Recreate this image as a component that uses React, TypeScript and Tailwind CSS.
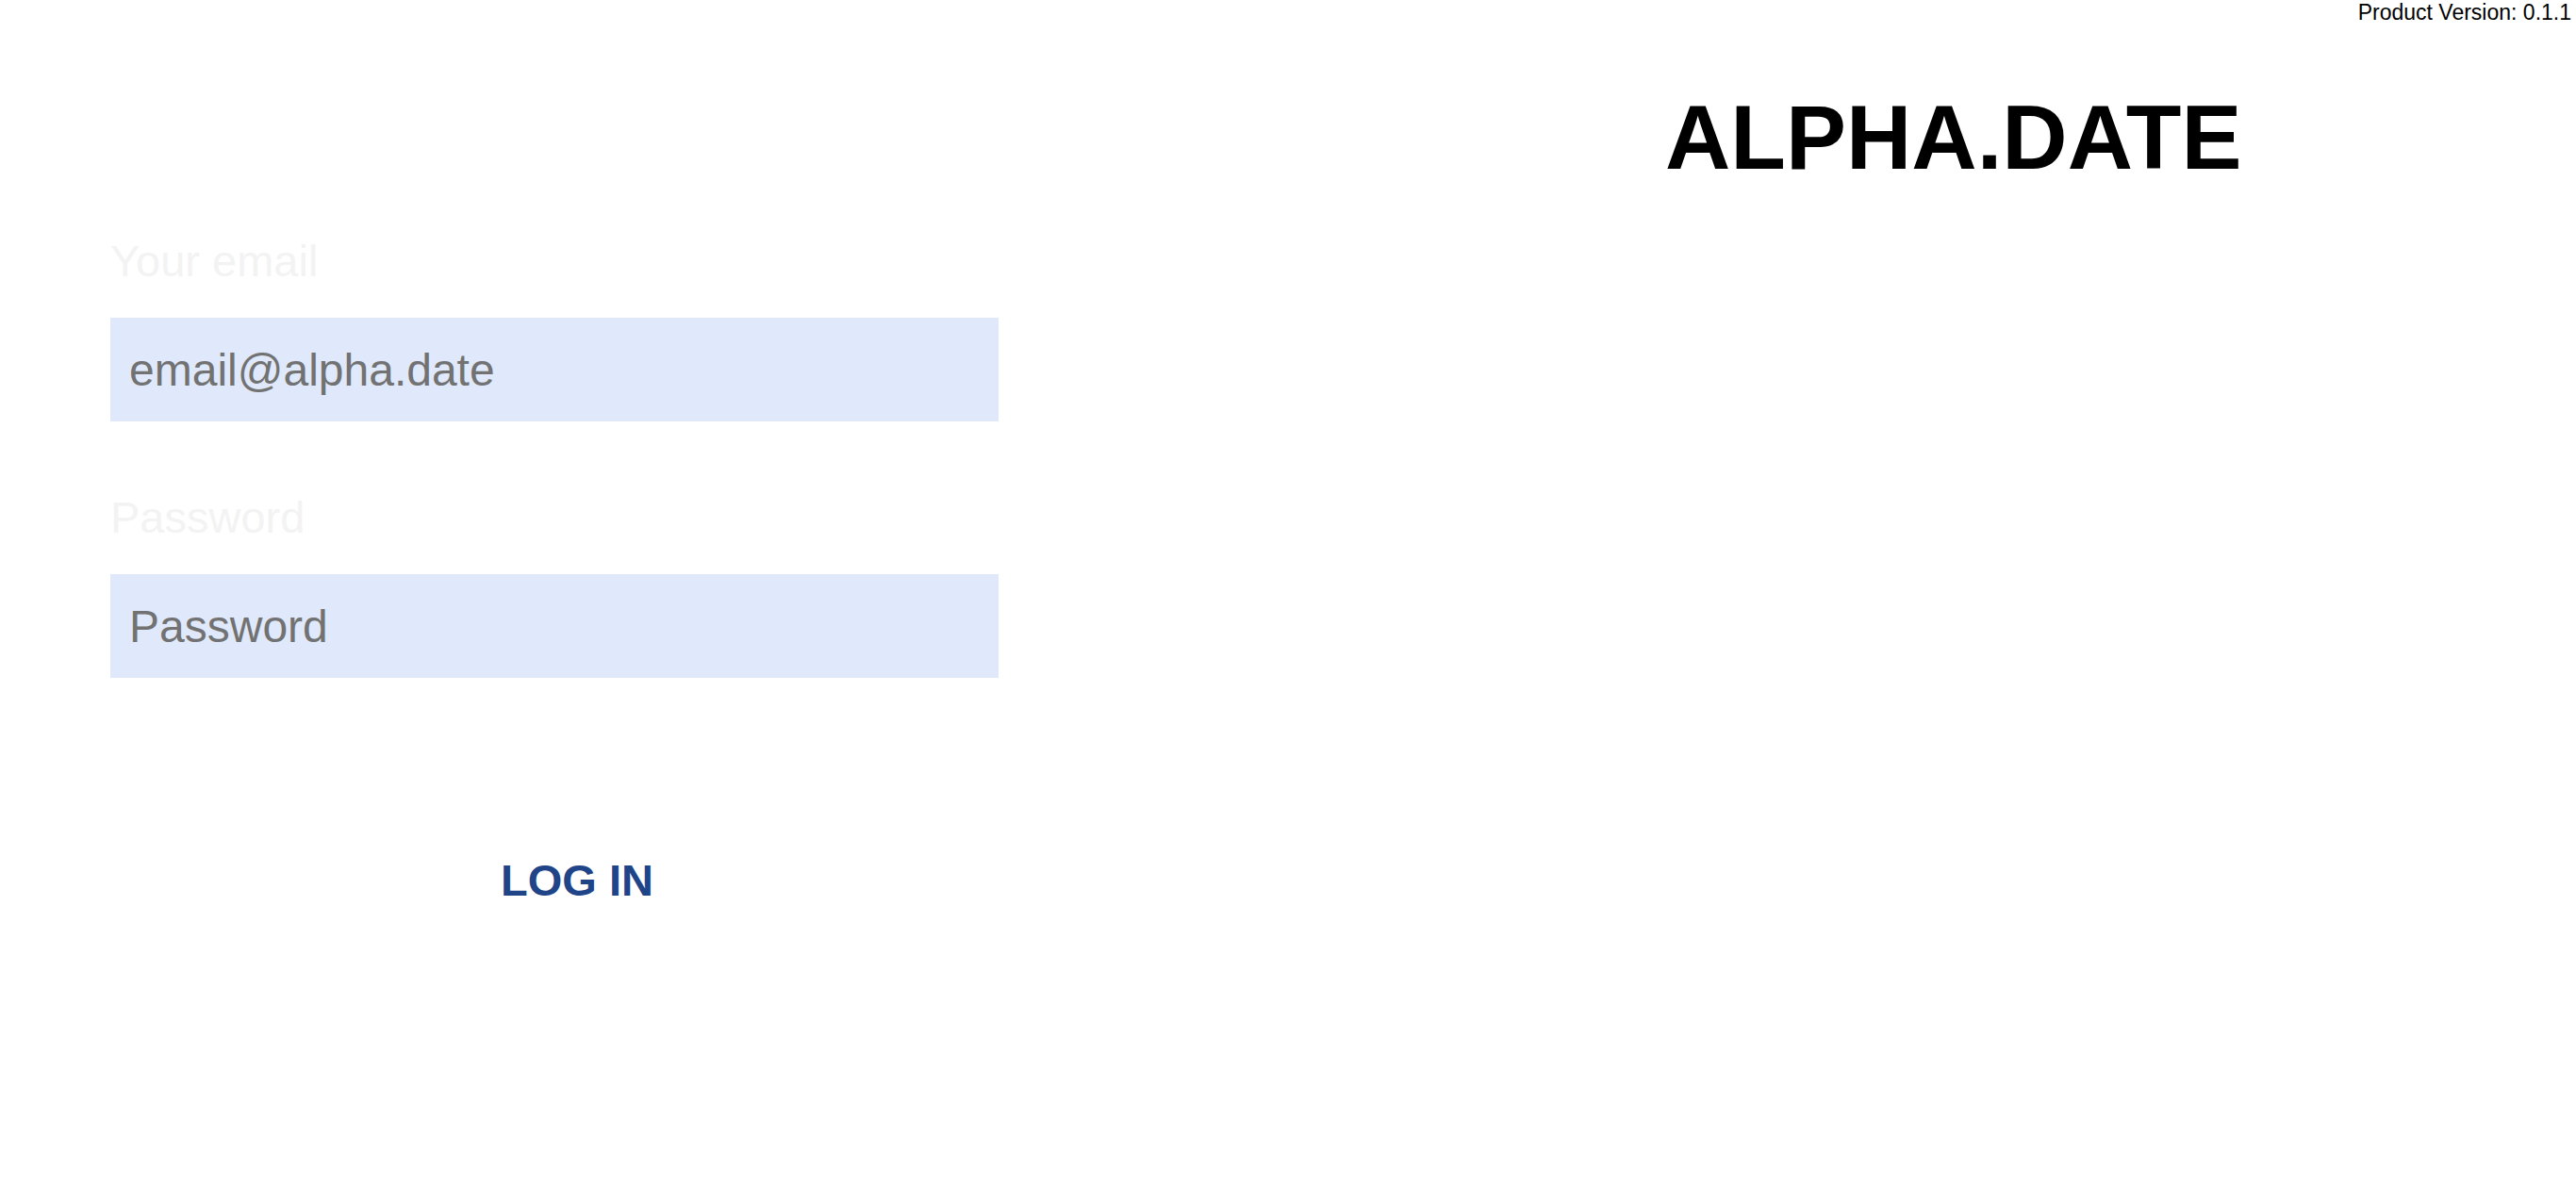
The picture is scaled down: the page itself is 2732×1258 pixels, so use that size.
import React, { FC } from 'react';

interface FieldProps {
    label: string;
    type: string;
    placeholder: string;
}

const Field: FC<FieldProps> = ({ label, type, placeholder }) => (
    <label className="flex flex-col">
        <span className="text-[47px] leading-none text-[#f3f3f3]">{label}</span>
        <input
            type={type}
            placeholder={placeholder}
            className="mt-[37px] h-[110px] w-[942px] bg-[#dfe9fb] px-[20px] text-[48px] text-[#333] outline-none
            placeholder:text-[#727272]"
        />
    </label>
);

const App: FC = () => (
    <div className="relative h-[1258px] w-full bg-white font-['Liberation_Sans',Arial,sans-serif]">
        <div className="absolute right-[5px] top-[2px] text-[23px] leading-none text-black">
            Product Version: 0.1.1
        </div>
        <div className="flex h-full">
            <div className="flex w-[1224px] flex-col pl-[117px] pt-[253px]">
                <Field label="Your email" type="email" placeholder="email@alpha.date" />
                <div className="mt-[78px]">
                    <Field label="Password" type="password" placeholder="Password" />
                </div>
                <div className="mt-[191px] flex w-[990px] justify-center">
                    <button type="button" className="text-[47px] font-bold leading-none text-[#1f4588]">
                        LOG IN
                    </button>
                </div>
            </div>
            <div className="flex-1 pl-[542px] pt-[98px]">
                <h1 className="text-[96px] font-bold leading-none text-black">ALPHA.DATE</h1>
            </div>
        </div>
    </div>
);

export default App;
